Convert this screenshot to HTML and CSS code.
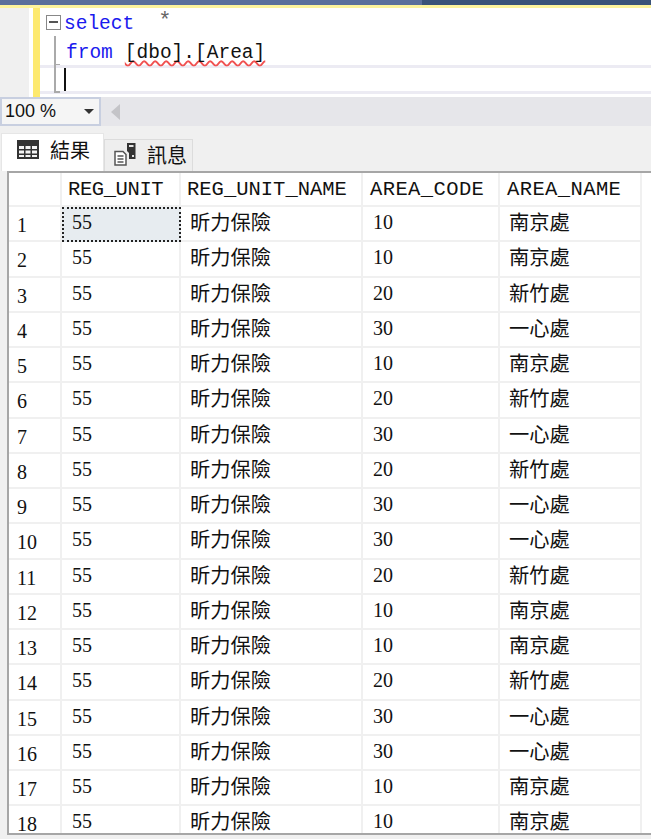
FILE: index.html
```html
<!DOCTYPE html>
<html lang="en">

<head>
	<meta charset="UTF-8">
	<title>SSMS query results</title>
	<link rel="stylesheet" href="styles.css">
</head>

<body>
	<div class="titlebar">
		<div class="titlebar-left"></div>
		<div class="titlebar-right"></div>
	</div>

	<div class="editor">
		<div class="gutter"></div>
		<div class="margin"></div>
		<div class="code">
			<div class="line line-first">
				<span class="fold-box"></span>
				<span class="kw">select</span>
				<span class="star">*</span>
			</div>
			<div class="line line-second">
				<span class="fold-line"></span>
				<span class="kw">from</span>
				<span class="squiggle">[dbo].[Area]</span>
			</div>
			<div class="line line-current">
				<span class="fold-end"></span>
				<span class="caret"></span>
			</div>
		</div>
	</div>

	<div class="zoombar">
		<div class="zoom-select">
			<span>100 %</span>
			<span class="zoom-arrow"></span>
		</div>
		<span class="scroll-left"></span>
	</div>

	<div class="tabs">
		<div class="tab tab-active">
			<svg class="tab-icon" width="22" height="19" viewBox="0 0 22 19">
				<path d="M0 0h22v19h-22z" fill="#333"/>
				<path d="M2 6h5v3h-5zM8.500 6h5v3h-5zM15 6h5v3h-5zM2 10.500h5v3h-5zM8.500 10.500h5v3h-5zM15 10.500h5v3h-5zM2 15h5v2h-5zM8.500 15h5v2h-5zM15 15h5v2h-5z" fill="#f4f4f4"/>
			</svg>
			<span>結果</span>
		</div>
		<div class="tab">
			<svg class="tab-icon" width="22" height="23" viewBox="0 0 22 23">
				<path d="M1 8.500h8l3 3v10.500h-11z" fill="#fff" stroke="#555" stroke-width="1.500"/>
				<path d="M3.500 13h6M3.500 16h6M3.500 19h6" stroke="#555" stroke-width="1.300" fill="none"/>
				<path d="M13 0h8.500v16h-6.500v-6l-2-2z" fill="#333"/>
				<path d="M15 2h4.500v2h-4.500zM18 12h2v2h-2z" fill="#e4e4e4"/>
			</svg>
			<span>訊息</span>
		</div>
	</div>

	<div class="grid">
		<div class="row head"><div class="rownum"></div><div class="head-short">REG_UNIT</div><div>REG_UNIT_NAME</div><div class="head-area">AREA_CODE</div><div class="head-area">AREA_NAME</div></div>
		<div class="row first"><div class="rownum">1</div><div class="cell-selected">55</div><div class="zh">昕力保險</div><div>10</div><div class="zh">南京處</div></div>
		<div class="row"><div class="rownum">2</div><div>55</div><div class="zh">昕力保險</div><div>10</div><div class="zh">南京處</div></div>
		<div class="row"><div class="rownum">3</div><div>55</div><div class="zh">昕力保險</div><div>20</div><div class="zh">新竹處</div></div>
		<div class="row"><div class="rownum">4</div><div>55</div><div class="zh">昕力保險</div><div>30</div><div class="zh">一心處</div></div>
		<div class="row"><div class="rownum">5</div><div>55</div><div class="zh">昕力保險</div><div>10</div><div class="zh">南京處</div></div>
		<div class="row"><div class="rownum">6</div><div>55</div><div class="zh">昕力保險</div><div>20</div><div class="zh">新竹處</div></div>
		<div class="row"><div class="rownum">7</div><div>55</div><div class="zh">昕力保險</div><div>30</div><div class="zh">一心處</div></div>
		<div class="row"><div class="rownum">8</div><div>55</div><div class="zh">昕力保險</div><div>20</div><div class="zh">新竹處</div></div>
		<div class="row"><div class="rownum">9</div><div>55</div><div class="zh">昕力保險</div><div>30</div><div class="zh">一心處</div></div>
		<div class="row"><div class="rownum">10</div><div>55</div><div class="zh">昕力保險</div><div>30</div><div class="zh">一心處</div></div>
		<div class="row"><div class="rownum">11</div><div>55</div><div class="zh">昕力保險</div><div>20</div><div class="zh">新竹處</div></div>
		<div class="row"><div class="rownum">12</div><div>55</div><div class="zh">昕力保險</div><div>10</div><div class="zh">南京處</div></div>
		<div class="row"><div class="rownum">13</div><div>55</div><div class="zh">昕力保險</div><div>10</div><div class="zh">南京處</div></div>
		<div class="row"><div class="rownum">14</div><div>55</div><div class="zh">昕力保險</div><div>20</div><div class="zh">新竹處</div></div>
		<div class="row"><div class="rownum">15</div><div>55</div><div class="zh">昕力保險</div><div>30</div><div class="zh">一心處</div></div>
		<div class="row"><div class="rownum">16</div><div>55</div><div class="zh">昕力保險</div><div>30</div><div class="zh">一心處</div></div>
		<div class="row"><div class="rownum">17</div><div>55</div><div class="zh">昕力保險</div><div>10</div><div class="zh">南京處</div></div>
		<div class="row"><div class="rownum">18</div><div>55</div><div class="zh">昕力保險</div><div>10</div><div class="zh">南京處</div></div>
	</div>
</body>

</html>
```

FILE: styles.css
```css
*,
*:before,
*:after {
	box-sizing: border-box;
}

html,
body {
	height: 839px;
	overflow: hidden;
}

body {
	margin: 0;
	background-color: #f0f0f0;
	color: #111;
	font-family: "Liberation Serif", "Noto Sans CJK TC", serif;
}

.titlebar {
	display: flex;
	height: 5px;
}

.titlebar-left {
	width: 422px;
	background-color: #5b6f9b;
}

.titlebar-right {
	flex: 1;
	background-color: #3a5278;
}

.editor {
	display: flex;
	height: 92px;
	border-top: 3px solid #fdf39c;
	background-color: #fff;
}

.gutter {
	width: 29px;
	background-color: #f0f0f0;
}

.margin {
	width: 11px;
	border-left: 4px solid #fff;
	background-color: #fde96f;
}

.code {
	flex: 1;
	font-family: "Liberation Mono", monospace;
	font-size: 19.500px;
}

.line {
	display: flex;
	align-items: center;
	height: 28px;
	padding-left: 5px;
	white-space: pre;
}

.line-second {
	height: 29px;
}

.line-current {
	height: 29px;
	border-top: 3px solid #ecebf3;
	border-bottom: 3px solid #ecebf3;
}

.kw {
	margin: 4px 0 0 3px;
	color: #1a1aee;
}

.star {
	margin: -2px 0 0 24px;
	font-size: 22px;
	color: #666;
}

.squiggle {
	margin: 4px 0 0 12px;
	text-decoration: underline wavy #f05050 1.500px;
	text-decoration-skip-ink: none;
	text-underline-offset: 2px;
}

.fold-box {
	flex: 0 0 auto;
	width: 15px;
	height: 15px;
	margin-left: 1px;
	border: 1px solid #888;
	background: linear-gradient(#555, #555) center / 9px 2px no-repeat;
}

.fold-line {
	flex: 0 0 auto;
	align-self: stretch;
	width: 9px;
	margin-left: 9px;
	border-left: 2px solid #aaa;
}

.fold-end {
	flex: 0 0 auto;
	width: 6px;
	height: 29px;
	margin: -3px 4px 0 9px;
	border-left: 2px solid #aaa;
	border-top: 1px solid #aaa;
	border-bottom: 2px solid #aaa;
}

.caret {
	width: 2px;
	height: 23px;
	background-color: #111;
}

.zoombar {
	display: flex;
	align-items: center;
	gap: 10px;
	height: 29px;
	background-color: #e6e6ea;
}

.zoom-select {
	display: flex;
	align-items: center;
	justify-content: space-between;
	width: 101px;
	height: 100%;
	padding: 0 5px 0 3px;
	border: 2px solid #c8cfe0;
	background-color: #f5f5f5;
	font-family: "Liberation Sans", sans-serif;
	font-size: 18px;
}

.zoom-arrow {
	border-top: 5px solid #333;
	border-left: 5px solid transparent;
	border-right: 5px solid transparent;
}

.scroll-left {
	border-right: 9px solid #c4c4c8;
	border-top: 8px solid transparent;
	border-bottom: 8px solid transparent;
}

.tabs {
	display: flex;
	align-items: flex-end;
	height: 45px;
	padding-left: 1px;
	font-family: "Noto Sans CJK TC", sans-serif;
	font-size: 20px;
}

.tab {
	display: flex;
	align-items: center;
	gap: 11px;
	height: 32px;
	padding: 0 5px 3px 9px;
	border: 1px solid #dcdcdc;
	border-bottom: 0;
	background-color: #eee;
}

.tab-active {
	gap: 11px;
	height: 38px;
	padding: 0 13px 7px 15px;
	border-color: #e6e6e6;
	background-color: #fff;
}

.grid {
	height: 664px;
	margin-left: 7px;
	overflow: hidden;
	border: 2px solid #a6a6a6;
	border-right: 0;
	background-color: #fff;
	font-size: 20px;
}

.row {
	display: grid;
	grid-template-columns: 53px 119px 182px 137px 142px;
	height: 35.250px;
	line-height: 31px;
}

.row > div {
	overflow: hidden;
	padding-left: 10px;
	border-right: 2px solid #f0f0f0;
	border-bottom: 2px solid #f0f0f0;
	white-space: nowrap;
}

.row > .rownum {
	padding: 3px 0 0 8px;
}

.row > .zh {
	padding-left: 9px;
	font-family: "Noto Sans CJK TC", sans-serif;
	font-size: 20.300px;
	line-height: 29px;
}

.head {
	height: 34px;
	font-family: "Liberation Mono", monospace;
	font-size: 20.500px;
	line-height: 33px;
}

.row > .head-short {
	letter-spacing: -.4px;
}

.row > .head-area {
	padding-left: 7px;
	letter-spacing: .4px;
}

.head > div {
	padding-left: 6px;
}

.row > .cell-selected {
	border: 2px dotted #222;
	background-color: #e7ecf0;
	padding-left: 8px;
	line-height: 27px;
}
```
